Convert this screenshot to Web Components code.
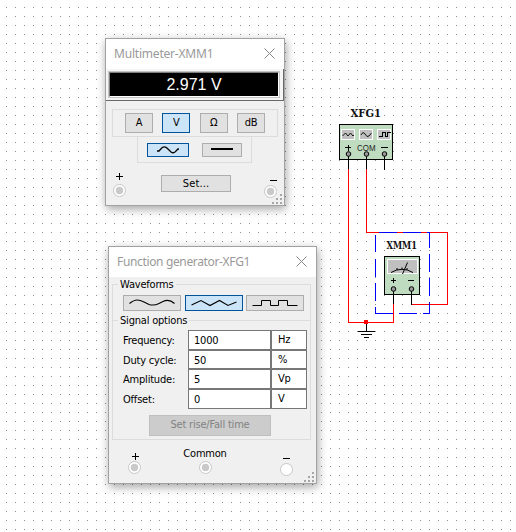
<!DOCTYPE html>
<html lang="en"><head><meta charset="utf-8"><title>Circuit workspace</title>
<style>html,body{margin:0;width:516px;height:532px;overflow:hidden;background:#fff}</style></head>
<body><circuit-workspace></circuit-workspace>
<script>
const define = (name, html) => customElements.define(name, class extends HTMLElement {
  constructor() {
    super();
    const t = document.createElement('template');
    t.innerHTML = html;
    this.attachShadow({mode: 'open'}).append(t.content.cloneNode(true));
  }
});

define('instrument-window', `<style>
:host{position:absolute;display:flex;flex-direction:column;box-sizing:border-box;border:1px solid #a2a2a2;background:#f0f0f0;box-shadow:1px 3px 9px rgba(0,0,0,.36);color:#000;font:11px/14px "DejaVu Sans Condensed","DejaVu Sans",sans-serif;letter-spacing:-.2px}
header{display:flex;justify-content:space-between;height:30px;flex:none;background:#fff;color:#999;padding:0 9px 0 8px;box-sizing:border-box;font:12px/29px "Noto Sans","Open Sans",sans-serif;letter-spacing:var(--title-spacing,-.2px)}
header svg{margin-top:9px}
.grip{position:absolute;right:0;bottom:0}
</style><header><span><slot name="title"></slot></span><svg width="11" height="11" fill="none" stroke="#888" stroke-width="1"><path d="M.5.5l10 10M10.500.5l-10 10"/></svg></header><slot></slot>
<svg class="grip" width="12" height="12" fill="#a6a6a6"><path d="M8 1h2v2h-2zM4 5h2v2h-2zM8 5h2v2h-2zM0 9h2v2h-2zM4 9h2v2h-2zM8 9h2v2h-2z"/></svg>`);

define('tool-button', `<style>
:host{display:flex;align-items:center;justify-content:center;box-sizing:border-box;border:1px solid #adadad;background:#e1e1e1;height:20px;width:28px;flex:none}
:host([active]){border-color:#00549b;background:#cce4f7}
:host([disabled]){background:#ccc;border-color:#bfbfbf;color:#838383}
</style><slot></slot>`);

define('wave-icon', `<style>:host{display:block;line-height:0}svg{display:none}
:host([kind=sine]) .sine,:host([kind=triangle]) .triangle,:host([kind=square]) .square,:host([kind=ac]) .ac,:host([kind=dc]) .dc{display:block}
</style>
<svg class="sine" width="46" height="8" fill="none" stroke="#000" stroke-width="1.100"><path d="M.5 4.500Q5 1 8 1t7 2l5 2.500q5 1.500 10-1L34 2.500Q40-.5 45.500 4.500"/></svg>
<svg class="triangle" width="46" height="8" fill="none" stroke="#000" stroke-width="1.100"><path d="M.5 6L10 1.500 19 6.500 28.500 1.500 37 6.500 45.500 3"/></svg>
<svg class="square" width="46" height="8" fill="none" stroke="#000"><path d="M.5 6.500h9v-5h9v5h8v-5h9v5h10"/></svg>
<svg class="ac" width="22" height="8" fill="none" stroke="#000" stroke-width="1.300"><path d="M0 5h2L5 1.700Q8-.3 11 3l3 3q3 2 5-1l2-2h1"/></svg>
<svg class="dc" width="22" height="8"><path d="M0 2h22v2H0z"/></svg>`);

define('terminal-jack', `<style>
:host{display:flex;flex-direction:column;align-items:center;width:13px;line-height:0}
.sign{margin-bottom:var(--sign-gap,1px);margin-left:var(--sign-shift,0)}svg{display:block;flex:none}
.v,.sign{display:none}:host([sign=plus]) .sign,:host([sign=minus]) .sign{display:block}
:host([sign=plus]) .v{display:block}
:host([empty]) .core{fill:#fff}
</style><svg class="sign" width="7" height="7"><path d="M0 3h7v1H0z"/><path class="v" d="M3 0h1v7H3z"/></svg>
<svg width="13" height="13"><circle cx="6.500" cy="6.500" r="6" fill="#fff" stroke="#c6c6c6"/><circle class="core" cx="6.500" cy="6.500" r="3.700" fill="#c9c9c9"/></svg>`);

define('digital-display', `<style>
:host{display:block;height:32px;flex:none;box-sizing:border-box;padding:3px 4px 2px 3px;background:#f5f5f5;border-right:1px solid #696969;border-bottom:1px solid #696969}
div{box-sizing:border-box;height:25px;border:1px solid #808080;border-right-color:#fff;border-bottom-color:#fff;outline:1px solid #c4c4c4;background:#000;color:#fff;text-align:center;letter-spacing:0;font:16px/23px "Liberation Sans",Arial,sans-serif}
</style><div><slot></slot></div>`);

define('button-group', `<style>:host{display:flex;box-sizing:border-box;border:1px solid #dcdcdc;flex:none}</style><slot></slot>`);

define('labelled-group', `<style>
:host{display:block;box-sizing:border-box;border:1px solid #dcdcdc;border-bottom-width:0;flex:none}
:host([last]){border-bottom-width:1px}
.legend{display:block;width:max-content;margin:-7px 0 0 5px;padding:0 2px;background:#f0f0f0;height:14px}
</style><span class="legend"><slot name="legend"></slot></span><slot></slot>`);

define('value-row', `<style>
:host{display:grid;grid-template-columns:65px 83px 36px;height:19.670px;margin-left:10px}
.label{padding-top:4px}
.box{box-sizing:border-box;background:#fff;border:1px solid #777;padding:3px 0 0 5px}
.unit{padding:2px 0 0 6px}
</style><span class="label"><slot name="label"></slot></span><span class="box"><slot name="value"></slot></span><span class="box unit"><slot name="unit"></slot></span>`);

define('multi-meter', `<style>
:host{display:contents}instrument-window{left:105px;top:38px;width:180px;height:168px}
.modes{margin:8px 6px 0;height:28px;width:166px;padding:3px 12px;justify-content:space-between}
.coupling{margin:-1px 0 0 31px;width:115px;height:27px;padding:6px 9px;justify-content:space-between}
.wave{width:42px;height:14px}.line{width:40px;height:14px}
footer{display:flex;align-items:flex-start;margin:10px 7px 0}
.set{width:70px;height:17px;margin:2px 0 0 35px;letter-spacing:.1px}
.plus{margin-top:0;--sign-gap:4px}.minus{margin:4px 0 0 33px;--sign-shift:5px}
</style><instrument-window><span slot="title">Multimeter-XMM1</span><digital-display>2.971 V</digital-display>
<button-group class="modes"><tool-button>A</tool-button><tool-button active>V</tool-button><tool-button>Ω</tool-button><tool-button>dB</tool-button></button-group>
<button-group class="coupling"><tool-button class="wave" active><wave-icon kind="ac"></wave-icon></tool-button><tool-button class="line"><wave-icon kind="dc"></wave-icon></tool-button></button-group>
<footer><terminal-jack class="plus" sign="plus"></terminal-jack><tool-button class="set">Set...</tool-button><terminal-jack class="minus" sign="minus"></terminal-jack></footer></instrument-window>`);

define('function-generator', `<style>
:host{display:contents}instrument-window{left:108px;top:246px;width:209px;height:238px;--title-spacing:-.35px}
labelled-group{width:199px;margin-left:3px}
.waves{margin-top:7px;height:36px}.signals{height:120px}
.row{display:flex;gap:4px;margin:3px 0 0 10px}
.row tool-button{width:58px;height:16px}
.rows{margin-top:2px}.rise{width:122px;height:21px;margin:6px 0 0 36px}
footer{display:flex;align-items:flex-start;padding-left:19px}
.plus{margin-top:13px;--sign-shift:1px}.common{display:flex;flex-direction:column;align-items:center;width:50px;margin:7px 0 0 39px}
.minus{margin:15px 0 0 50px}
</style><instrument-window><span slot="title">Function generator-XFG1</span>
<labelled-group class="waves"><span slot="legend">Waveforms</span><div class="row"><tool-button><wave-icon kind="sine"></wave-icon></tool-button><tool-button active><wave-icon kind="triangle"></wave-icon></tool-button><tool-button style="margin-left:-1px"><wave-icon kind="square"></wave-icon></tool-button></div></labelled-group>
<labelled-group class="signals" last><span slot="legend">Signal options</span><div class="rows">
<value-row><span slot="label">Frequency:</span><span slot="value">1000</span><span slot="unit">Hz</span></value-row>
<value-row><span slot="label">Duty cycle:</span><span slot="value">50</span><span slot="unit">%</span></value-row>
<value-row><span slot="label">Amplitude:</span><span slot="value">5</span><span slot="unit">Vp</span></value-row>
<value-row><span slot="label">Offset:</span><span slot="value">0</span><span slot="unit">V</span></value-row></div>
<tool-button class="rise" disabled>Set rise/Fall time</tool-button></labelled-group>
<footer><terminal-jack class="plus" sign="plus"></terminal-jack><div class="common"><span>Common</span><terminal-jack></terminal-jack></div><terminal-jack class="minus" sign="minus" empty></terminal-jack></footer></instrument-window>`);

define('circuit-diagram', `<style>:host{display:block}svg{display:block}</style>
<svg width="516" height="532" viewBox="0 0 516 532" fill="none" shape-rendering="crispEdges">
<defs><pattern id="dots" width="9" height="9" patternUnits="userSpaceOnUse"><path d="M6 7h1v1H6z" fill="#8c8c8c"/></pattern></defs>
<path d="M0 0h516v532H0z" fill="url(#dots)"/>
<g stroke="#f00"><path d="M348.500 168v154.500h45V304M366.500 168v64.500h81v72h-36"/></g>
<path d="M364 320h4v4h-4z" fill="#f00"/>
<path d="M379 232.500h18M403 232.500h18M427 232.500h2.500V248M429.500 254v18M429.500 278v18M429.500 302v11.500H423M417 313.500h-18M393 313.500h-17.500V307M375.500 301v-18M375.500 277v-18M375.500 252v-17" stroke="#00f"/>
<g stroke="#000"><path d="M348.500 154v15M366.500 154v15M384.500 154v16M393.500 289v15M411.500 289v15.500M366.500 324v8M358 331.500h17M361 334.500h11M364 337.500h5"/></g>
<path d="M339.500 124.500h53v35h-53zM384.500 256.500h35v38h-35z" fill="#c0dcc0" stroke="#000"/>
<path d="M341.500 129.500h13v10h-13zM359.500 129.500h13v10h-13zM377.500 129.500h13v10h-13z" fill="#c0c0c0" stroke="#fff"/>
<g stroke="#000" stroke-width=".9" shape-rendering="auto"><path d="M342.500 136l3-3 2.500 3 2.500-3 2.500 3 1-1M361 135q2-4 4-1 2 4 4 2l2.500-3"/></g>
<path d="M379 136.500h3.500v-4h3v4h2v-4h3" stroke="#000"/>
<path d="M387.500 259.500h30v14h-30z" fill="#c0c0c0" stroke="#fff"/>
<g stroke="#000" shape-rendering="auto"><path d="M391 272.500q11-6.500 22 0M402.500 274l5-11.500M397 268v2M402 267.500v2M407 268v2"/></g>
<path d="M345 147.500h6M348.500 145v6M381 147.500h7M391 280.500h5M393.500 278v5M408 280.500h6" stroke="#000"/>
<path d="M348.500 156v4M366.500 156v4M384.500 156v4M393.500 291v4M411.500 291v4" stroke="#000"/>
<g fill="#999" stroke="#000" shape-rendering="auto"><circle cx="348.500" cy="154" r="2.300"/><circle cx="366.500" cy="154" r="2.300"/><circle cx="384.500" cy="154" r="2.300"/><circle cx="393.500" cy="289" r="2.300"/><circle cx="411.500" cy="289" r="2.300"/></g>
<text x="357" y="150.500" textLength="18.500" lengthAdjust="spacingAndGlyphs" fill="#222" font-family="Liberation Sans,sans-serif" font-size="9.500">COM</text>
<g fill="#111" font-family="DejaVu Serif,serif" font-weight="bold" font-size="11"><text x="350.500" y="117" textLength="30.500" lengthAdjust="spacingAndGlyphs">XFG1</text><text x="386.500" y="249" textLength="30.500" lengthAdjust="spacingAndGlyphs">XMM1</text></g>
</svg>`);

define('circuit-workspace', `<style>:host{display:block;position:relative;width:516px;height:532px;overflow:hidden;background:#fff}</style>
<circuit-diagram></circuit-diagram><multi-meter></multi-meter><function-generator></function-generator>`);
</script></body></html>
